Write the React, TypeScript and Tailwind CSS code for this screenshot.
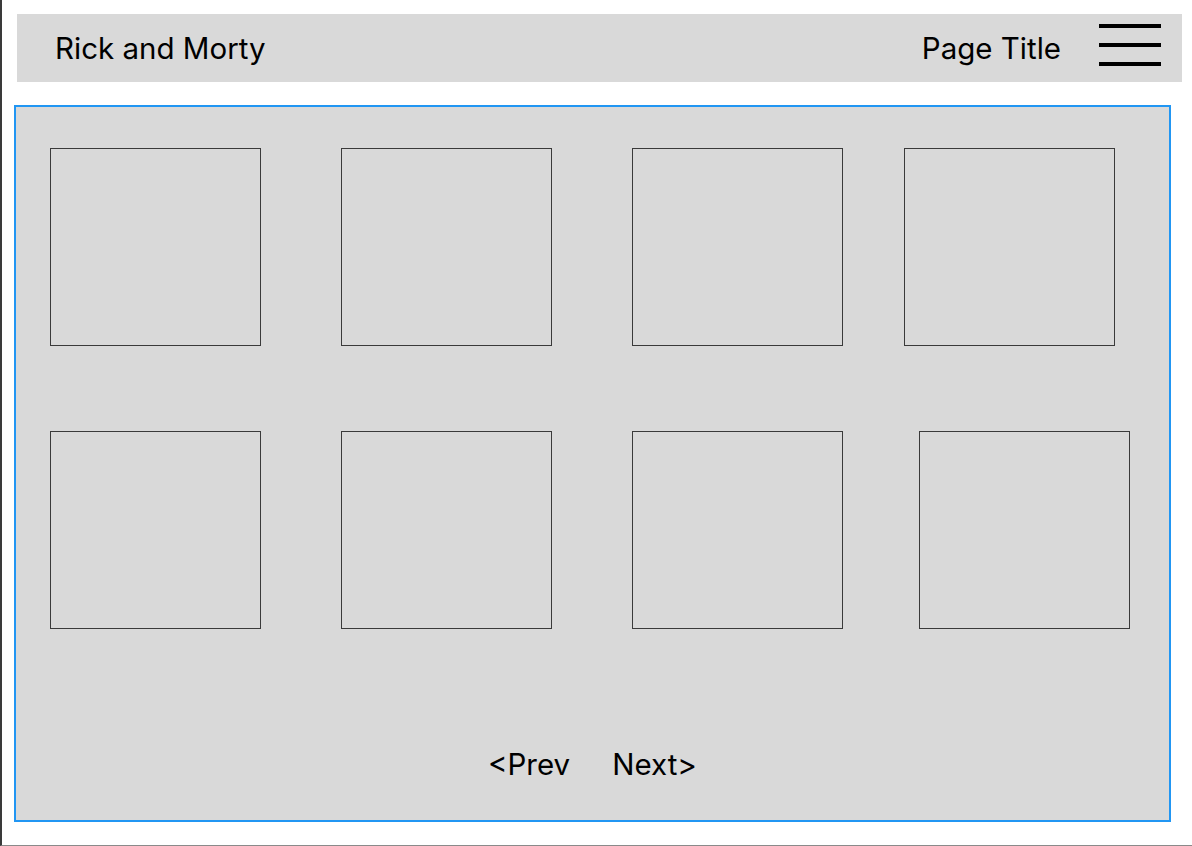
const row1 = ["ml-0", "ml-[80px]", "ml-[80px]", "ml-[61px]"];
const row2 = ["ml-0", "ml-[80px]", "ml-[80px]", "ml-[76px]"];

function Card({ className = "" }: { className?: string }) {
  return (
    <div
      className={`h-[198px] w-[211px] shrink-0 border border-[#3a3a3a] bg-[#d9d9d9] ${className}`}
    />
  );
}

export default function App() {
  return (
    <div
      className="h-[846px] w-[1192px] overflow-hidden border-b border-l-2 border-b-[#8a8a8a] border-l-[#3a3a3a] bg-white text-black"
      style={{ fontFamily: "Inter, 'Liberation Sans', sans-serif" }}
    >
      <header className="ml-[15px] mt-[14px] flex h-[68px] w-[1165px] items-center bg-[#d9d9d9] pl-[38px] pr-[21px] pt-[2px]">
        <div className="text-[29.5px] leading-none">Rick and Morty</div>
        <div className="ml-auto text-[29.5px] leading-none">Page Title</div>
        <button
          type="button"
          aria-label="Menu"
          className="ml-[38px] mt-[8px] flex h-[42px] w-[62px] flex-col justify-between self-start"
        >
          <span className="block h-[4px] w-full bg-black" />
          <span className="block h-[4px] w-full bg-black" />
          <span className="block h-[4px] w-full bg-black" />
        </button>
      </header>

      <main className="ml-[12px] mt-[23px] flex h-[717px] w-[1157px] flex-col border-2 border-[#2196f3] bg-[#d9d9d9] pl-[34px] pt-[41px]">
        <div className="flex">
          {row1.map((m, i) => (
            <Card key={i} className={m} />
          ))}
        </div>
        <div className="mt-[85px] flex">
          {row2.map((m, i) => (
            <Card key={i} className={m} />
          ))}
        </div>
        <nav className="mt-[121px] flex pl-[438px] text-[29.5px] leading-none">
          <button type="button">&lt;Prev</button>
          <button type="button" className="ml-[42px]">
            Next&gt;
          </button>
        </nav>
      </main>
    </div>
  );
}
